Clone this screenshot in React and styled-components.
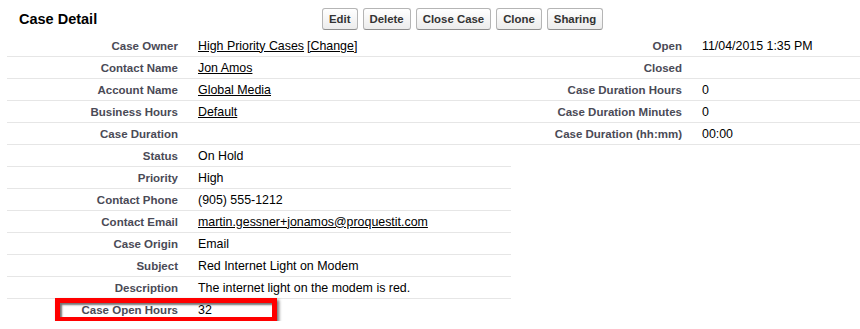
import React from 'react';
import styled, { createGlobalStyle } from 'styled-components';

const GlobalStyle = createGlobalStyle`
  body {
    margin: 0;
    background: #ffffff;
    font-family: 'Liberation Sans', Arial, sans-serif;
  }
`;

const Section = styled.div`
  width: 860px;
  background: #ffffff;
`;

const Header = styled.div`
  display: flex;
  align-items: center;
  padding: 8px 0 5px 19px;
`;

const Title = styled.h2`
  margin: 0;
  width: 303px;
  font-size: 14.5px;
  font-weight: bold;
  color: #000000;
`;

const Buttons = styled.div`
  display: flex;
  gap: 5px;
`;

const Button = styled.button`
  height: 22px;
  padding: 0 6px;
  font-family: 'Liberation Sans', Arial, sans-serif;
  font-size: 11.4px;
  font-weight: bold;
  color: #333333;
  border: 1px solid #b5b5b5;
  border-bottom-color: #8f8f8f;
  border-radius: 3px;
  background: linear-gradient(#ffffff, #ececec);
`;

const Table = styled.div`
  display: grid;
  grid-template-columns: 181px 323px 181px 1fr;
  margin-left: 7px;
`;

const Cell = styled.div`
  position: relative;
  height: 21px;
  display: flex;
  align-items: center;
  border-bottom: 1px solid ${(p) => (p.$line ? '#e6e6e6' : 'transparent')};
`;

const Label = styled(Cell)`
  justify-content: flex-end;
  padding-right: 10px;
  font-size: 11.5px;
  font-weight: bold;
  color: #4a4a56;
`;

const Data = styled(Cell)`
  padding-left: 10px;
  font-size: 12.4px;
  color: #000000;
  white-space: nowrap;
`;

const Link = styled.a`
  color: #000000;
  text-decoration: underline;
  margin-right: 3px;
`;

const Highlight = styled.span`
  position: absolute;
  left: 48px;
  top: -1px;
  width: 222px;
  height: 24px;
  box-sizing: border-box;
  border: 5px solid #ff0000;
  box-shadow: inset 2px 2px 2px rgba(0, 0, 0, 0.55), 2px 2px 3px rgba(0, 0, 0, 0.55);
  pointer-events: none;
`;

const left = [
  ['Case Owner', [<Link key="a">High Priority Cases</Link>, <Link key="b">[Change]</Link>]],
  ['Contact Name', <Link>Jon Amos</Link>],
  ['Account Name', <Link>Global Media</Link>],
  ['Business Hours', <Link>Default</Link>],
  ['Case Duration', ''],
  ['Status', 'On Hold'],
  ['Priority', 'High'],
  ['Contact Phone', '(905) 555-1212'],
  ['Contact Email', <Link>martin.gessner+jonamos@proquestit.com</Link>],
  ['Case Origin', 'Email'],
  ['Subject', 'Red Internet Light on Modem'],
  ['Description', 'The internet light on the modem is red.'],
  ['Case Open Hours', '32'],
];

const right = [
  ['Open', '11/04/2015 1:35 PM'],
  ['Closed', ''],
  ['Case Duration Hours', '0'],
  ['Case Duration Minutes', '0'],
  ['Case Duration (hh:mm)', '00:00'],
];

function App() {
  const last = left.length - 1;
  return (
    <Section>
      <GlobalStyle />
      <Header>
        <Title>Case Detail</Title>
        <Buttons>
          <Button>Edit</Button>
          <Button>Delete</Button>
          <Button>Close Case</Button>
          <Button>Clone</Button>
          <Button>Sharing</Button>
        </Buttons>
      </Header>
      <Table>
        {left.map(([label, value], i) => {
          const r = right[i];
          const line = i !== last;
          return (
            <React.Fragment key={label}>
              <Label $line={line}>
                {label}
                {i === last && <Highlight />}
              </Label>
              <Data $line={line}>{value}</Data>
              <Label $line={!!r}>{r ? r[0] : ''}</Label>
              <Data $line={!!r}>{r ? r[1] : ''}</Data>
            </React.Fragment>
          );
        })}
      </Table>
    </Section>
  );
}

export default App;
